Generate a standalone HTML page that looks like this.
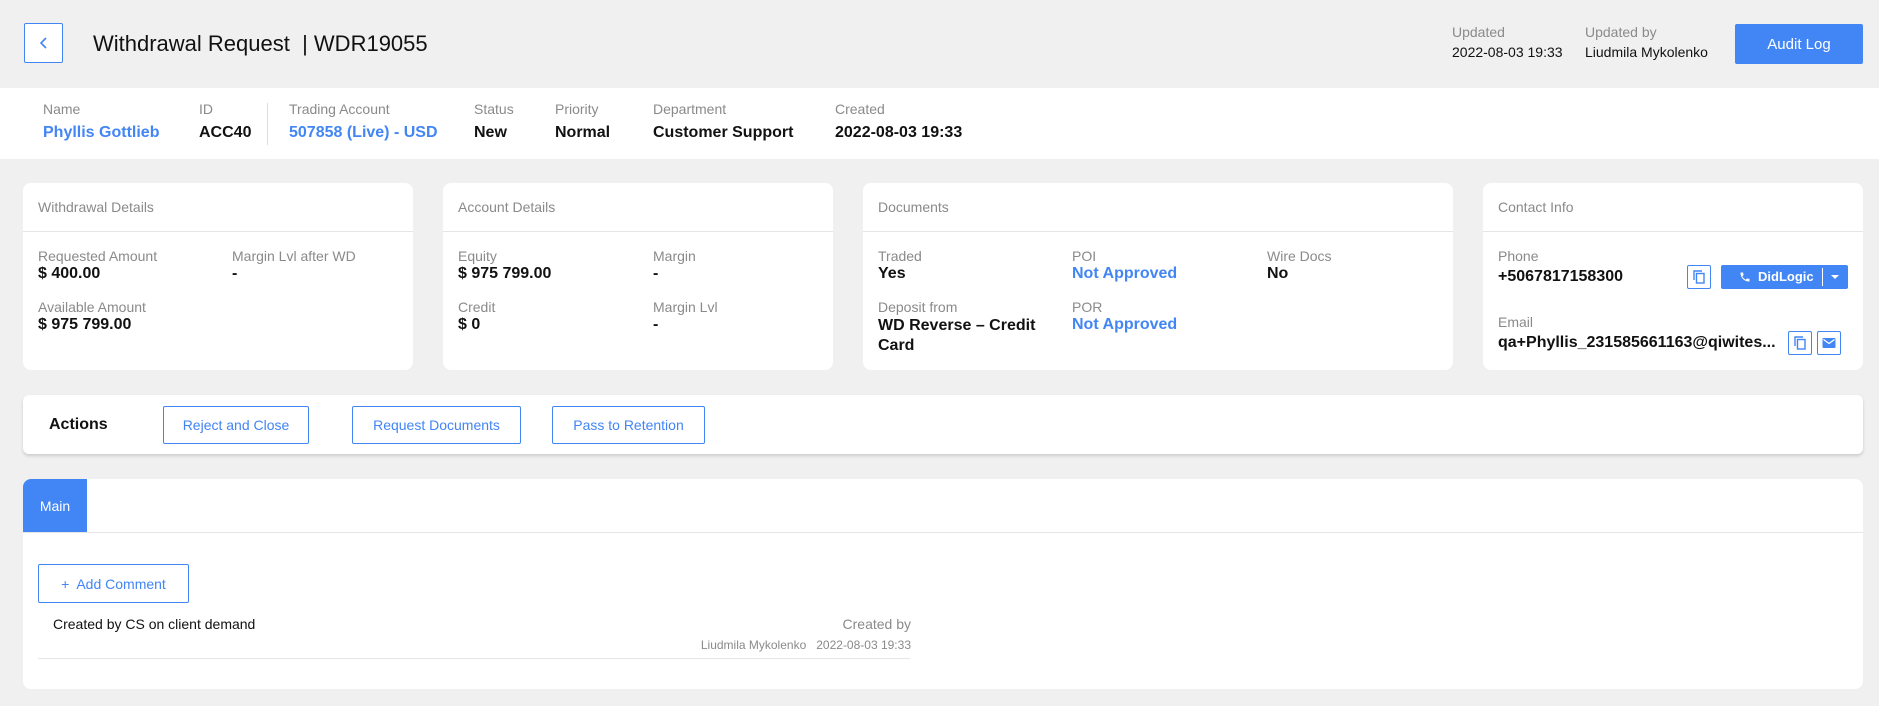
<!DOCTYPE html>
<html><head><meta charset="utf-8"><style>
*{box-sizing:border-box;margin:0;padding:0}
body{width:1879px;height:706px;background:#f0f0f0;font-family:"Liberation Sans",sans-serif;position:relative;overflow:hidden;color:#111}
.a{position:absolute;white-space:nowrap}
.lbl{font-size:14px;color:#8a8a8a}
.val{font-size:16px;font-weight:bold;color:#111}
.blue{color:#4285f4}
.card{position:absolute;background:#fff;border-radius:8px}
.hd{position:absolute;left:0;right:0;top:0;height:49px;border-bottom:1px solid #e6e6e6}
.hd span{position:absolute;left:15px;top:16px;font-size:14px;color:#8a8a8a}
.btn{position:absolute;border:1px solid #4285f4;color:#4285f4;font-size:14px;display:flex;align-items:center;justify-content:center;background:#fff;border-radius:2px}
.ib{position:absolute;border:1px solid #4285f4;border-radius:2px;background:#fff;display:flex;align-items:center;justify-content:center}
</style></head><body>
<div class="ib" style="left:24px;top:23px;width:39px;height:40px"><svg width="12" height="14" viewBox="0 0 12 14"><path d="M8 2L3 7l5 5" fill="none" stroke="#4285f4" stroke-width="1.6"/></svg></div>
<div class="a" style="left:93px;top:31px;font-size:22px;color:#111">Withdrawal Request&nbsp; | WDR19055</div>
<div class="a lbl" style="left:1452px;top:24px">Updated</div>
<div class="a" style="left:1452px;top:44px;font-size:14px">2022-08-03 19:33</div>
<div class="a lbl" style="left:1585px;top:24px">Updated by</div>
<div class="a" style="left:1585px;top:44px;font-size:14px">Liudmila Mykolenko</div>
<div class="a" style="left:1735px;top:24px;width:128px;height:40px;background:#4285f4;color:#fff;font-size:15px;display:flex;align-items:center;justify-content:center;border-radius:2px">Audit Log</div>

<div class="a" style="left:0;top:88px;width:1879px;height:71px;background:#fff"></div>
<div class="a" style="left:267px;top:103px;width:1px;height:42px;background:#ddd"></div>
<div class="a lbl" style="left:43px;top:101px">Name</div><div class="a val blue" style="left:43px;top:124px">Phyllis Gottlieb</div>
<div class="a lbl" style="left:199px;top:101px">ID</div><div class="a val" style="left:199px;top:124px">ACC40</div>
<div class="a lbl" style="left:289px;top:101px">Trading Account</div><div class="a val blue" style="left:289px;top:124px">507858 (Live) - USD</div>
<div class="a lbl" style="left:474px;top:101px">Status</div><div class="a val" style="left:474px;top:124px">New</div>
<div class="a lbl" style="left:555px;top:101px">Priority</div><div class="a val" style="left:555px;top:124px">Normal</div>
<div class="a lbl" style="left:653px;top:101px">Department</div><div class="a val" style="left:653px;top:124px">Customer Support</div>
<div class="a lbl" style="left:835px;top:101px">Created</div><div class="a val" style="left:835px;top:124px">2022-08-03 19:33</div>

<div class="card" style="left:23px;top:183px;width:390px;height:187px"><div class="hd"><span>Withdrawal Details</span></div>
<div class="a lbl" style="left:15px;top:65px">Requested Amount</div><div class="a val" style="left:15px;top:82px">$ 400.00</div>
<div class="a lbl" style="left:209px;top:65px">Margin Lvl after WD</div><div class="a val" style="left:209px;top:82px">-</div>
<div class="a lbl" style="left:15px;top:116px">Available Amount</div><div class="a val" style="left:15px;top:133px">$ 975 799.00</div></div>

<div class="card" style="left:443px;top:183px;width:390px;height:187px"><div class="hd"><span>Account Details</span></div>
<div class="a lbl" style="left:15px;top:65px">Equity</div><div class="a val" style="left:15px;top:82px">$ 975 799.00</div>
<div class="a lbl" style="left:210px;top:65px">Margin</div><div class="a val" style="left:210px;top:82px">-</div>
<div class="a lbl" style="left:15px;top:116px">Credit</div><div class="a val" style="left:15px;top:133px">$ 0</div>
<div class="a lbl" style="left:210px;top:116px">Margin Lvl</div><div class="a val" style="left:210px;top:133px">-</div></div>

<div class="card" style="left:863px;top:183px;width:590px;height:187px"><div class="hd"><span>Documents</span></div>
<div class="a lbl" style="left:15px;top:65px">Traded</div><div class="a val" style="left:15px;top:82px">Yes</div>
<div class="a lbl" style="left:209px;top:65px">POI</div><div class="a val blue" style="left:209px;top:82px">Not Approved</div>
<div class="a lbl" style="left:404px;top:65px">Wire Docs</div><div class="a val" style="left:404px;top:82px">No</div>
<div class="a lbl" style="left:15px;top:116px">Deposit from</div><div class="a val" style="left:15px;top:133px;line-height:20px">WD Reverse – Credit<br>Card</div>
<div class="a lbl" style="left:209px;top:116px">POR</div><div class="a val blue" style="left:209px;top:133px">Not Approved</div></div>

<div class="card" style="left:1483px;top:183px;width:380px;height:187px"><div class="hd"><span>Contact Info</span></div>
<div class="a lbl" style="left:15px;top:65px">Phone</div><div class="a val" style="left:15px;top:85px">+5067817158300</div>
<div class="a lbl" style="left:15px;top:131px">Email</div><div class="a val" style="left:15px;top:151px">qa+Phyllis_231585661163@qiwites...</div></div>
<div class="ib" style="left:1687px;top:265px;width:24px;height:24px"><svg width="14" height="14" viewBox="0 0 14 14"><path d="M2 10V1h8" fill="none" stroke="#4285f4" stroke-width="1.4"/><rect x="4.5" y="3.5" width="7.5" height="9.5" fill="none" stroke="#4285f4" stroke-width="1.4"/></svg></div>
<div class="a" style="left:1721px;top:265px;width:127px;height:24px;background:#4285f4;border-radius:2px;color:#fff;font-size:13px;font-weight:bold">
<svg style="position:absolute;left:18px;top:6px" width="12" height="12" viewBox="0 0 24 24"><path fill="#fff" d="M6.6 10.8c1.4 2.8 3.8 5.1 6.6 6.6l2.2-2.2c.3-.3.7-.4 1-.2 1.1.4 2.3.6 3.6.6.6 0 1 .4 1 1V20c0 .6-.4 1-1 1C10.6 21 3 13.4 3 4c0-.6.4-1 1-1h3.5c.6 0 1 .4 1 1 0 1.3.2 2.5.6 3.6.1.3 0 .7-.2 1z"/></svg>
<span style="position:absolute;left:37px;top:4px">DidLogic</span>
<div style="position:absolute;left:101px;top:3px;width:1px;height:18px;background:#fff"></div>
<div style="position:absolute;left:110px;top:10px;border-left:4px solid transparent;border-right:4px solid transparent;border-top:4px solid #fff"></div></div>
<div class="ib" style="left:1788px;top:331px;width:24px;height:24px"><svg width="14" height="14" viewBox="0 0 14 14"><path d="M2 10V1h8" fill="none" stroke="#4285f4" stroke-width="1.4"/><rect x="4.5" y="3.5" width="7.5" height="9.5" fill="none" stroke="#4285f4" stroke-width="1.4"/></svg></div>
<div class="ib" style="left:1817px;top:331px;width:24px;height:24px"><svg width="14" height="12" viewBox="0 0 14 12"><rect x="0.5" y="1" width="13" height="10" rx="1" fill="#4285f4"/><path d="M1.5 2.5L7 6.5l5.5-4" fill="none" stroke="#fff" stroke-width="1.3"/></svg></div>

<div class="card" style="left:23px;top:395px;width:1840px;height:59px;border-radius:6px;box-shadow:0 2px 3px rgba(0,0,0,.15)"></div>
<div class="a" style="left:49px;top:416px;font-size:16px;font-weight:bold">Actions</div>
<div class="btn" style="left:163px;top:406px;width:146px;height:38px">Reject and Close</div>
<div class="btn" style="left:352px;top:406px;width:169px;height:38px">Request Documents</div>
<div class="btn" style="left:552px;top:406px;width:153px;height:38px">Pass to Retention</div>

<div class="card" style="left:23px;top:479px;width:1840px;height:210px;overflow:hidden">
<div style="position:absolute;left:0;top:0;width:64px;height:54px;background:#4285f4;color:#fff;font-size:14px;display:flex;align-items:center;justify-content:center">Main</div>
<div style="position:absolute;left:0;right:0;top:53px;height:1px;background:#e6e6e6"></div>
<div class="btn" style="left:15px;top:85px;width:151px;height:39px">+&nbsp; Add Comment</div>
<div class="a" style="left:30px;top:137px;font-size:14px">Created by CS on client demand</div>
<div class="a lbl" style="right:952px;top:137px">Created by</div>
<div class="a" style="right:952px;top:159px;font-size:12px;color:#8a8a8a">Liudmila Mykolenko&nbsp;&nbsp; 2022-08-03 19:33</div>
<div style="position:absolute;left:15px;width:872px;top:179px;height:1px;background:#e6e6e6"></div>
</div>
</body></html>
